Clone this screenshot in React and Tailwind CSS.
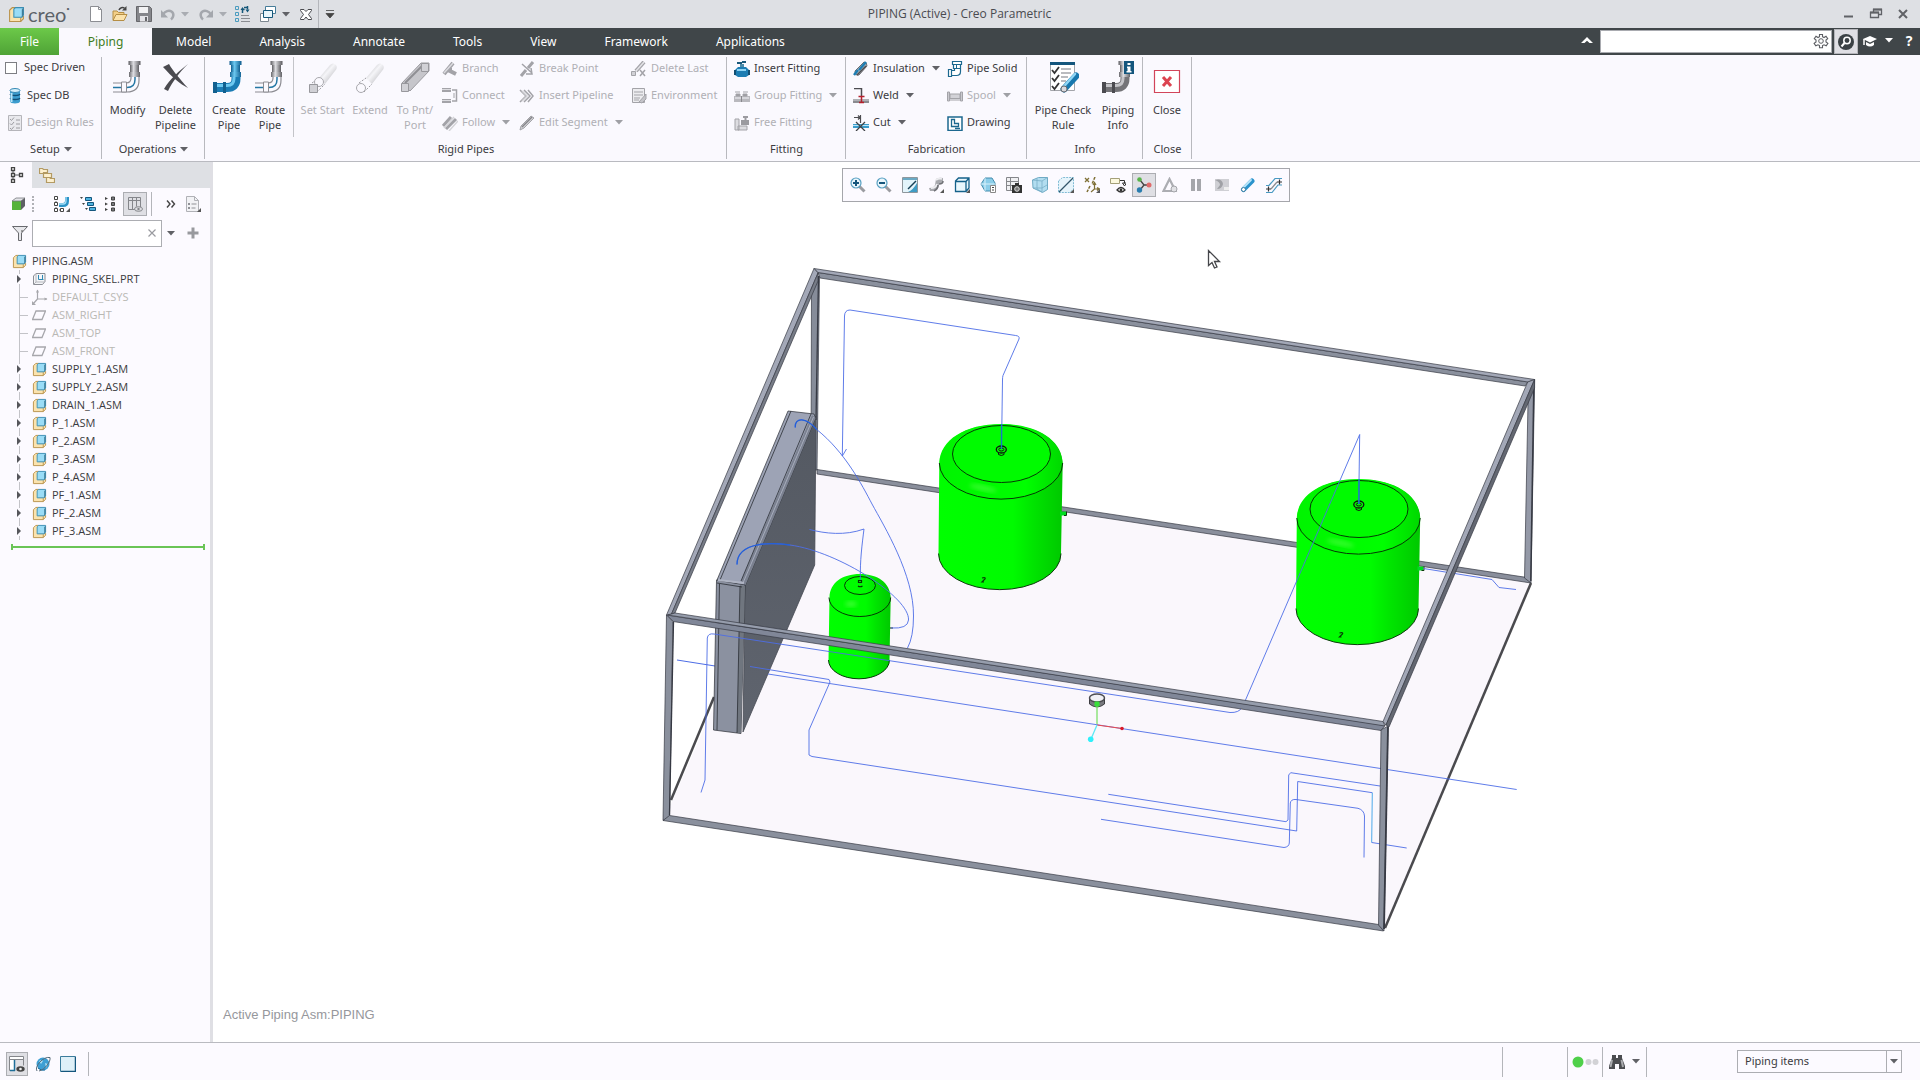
import React from "react";

const UI = "font-['Noto_Sans','Open_Sans',sans-serif]";
const CAPS = "font-['Open_Sans','Noto_Sans',sans-serif]";

/* ---------- small building blocks ---------- */

function Svg({ s = 16, children, className = "" }) {
  return (
    <svg width={s} height={s} viewBox={`0 0 ${s} ${s}`} fill="none" className={`shrink-0 ${className}`} aria-hidden="true">
      {children}
    </svg>
  );
}

function Caret({ className = "text-[#606166]" }) {
  return (
    <svg width="8" height="5" viewBox="0 0 8 5" className={`shrink-0 ${className}`} aria-hidden="true">
      <path d="M0 0h8L4 4.500z" fill="currentColor" />
    </svg>
  );
}

const Corner = () => <path d="M16 12v4h-4z" fill="#555" />;

/* ---------- title bar icons ---------- */

const AsmIcon = ({ s = 16 }) => (
  <svg width={s} height={s} viewBox="0 0 16 16" fill="none" className="shrink-0" aria-hidden="true">
    <path d="M1.500 4 4 1.500h3V10h7.500v2L12 14.500H1.500z" fill="#fbe3ae" stroke="#b9924c" />
    <path d="M12 14.500V11" stroke="#b9924c" />
    <path d="M5.500 3 7 1.500h7.500v7L13 10.500H5.500z" fill="#9adcf6" stroke="#3c8fb4" />
    <path d="M13 3.500 14.500 1.500v7L13 10.500z" fill="#3f7d99" />
  </svg>
);
const NewIcon = () => (
  <Svg><path d="M2.500.5h8l3 3v12h-11z" fill="#fff" stroke="#8b8d92" /><path d="M10.500.5v3h3" stroke="#8b8d92" /></Svg>
);
const OpenIcon = () => (
  <Svg><path d="M1 14V5h4l1.500 1.500H12V9" fill="#f3cf88" stroke="#b58e45" /><path d="M1 14.500 4 8.500h11l-3 6z" fill="#fbe2ab" stroke="#b58e45" /><path d="M7 4c1-2.500 3.500-3 5.500-2" stroke="#444" strokeWidth="1.500" /><path d="M14.500 0v4.500H10z" fill="#444" /></Svg>
);
const SaveIcon = () => (
  <Svg><path d="M.5.5h13l2 2v13H.5z" fill="#85868b" stroke="#66676b" /><path d="M3 1h9v6H3z" fill="#f2f2f4" /><path d="M4 10h8v5.500H4z" fill="#e4e4e8" /><path d="M9 11h2v4H9z" fill="#66676b" /></Svg>
);
const UndoIcon = ({ flip }) => (
  <Svg className={flip ? "-scale-x-100" : ""}><path d="M3 8.500C5 5 9 4 11.500 5.500c3 2 2 6-.5 8" stroke="#a4a7ad" strokeWidth="2.500" /><path d="M1 4v7.500h7z" fill="#a4a7ad" /></Svg>
);
const RegenIcon = () => (
  <Svg><path d="M.5.5h3v3h-3zM.5 6.500h3v3h-3zM.5 12.500h3v3h-3z" stroke="#4b9cbf" /><path d="M6 9.500h8M6 12.500h9M6 15.500h9" stroke="#8b8d92" /><path d="M7.500 7V3.500h2M12.500 0v3.500M9 1.500h3.500" stroke="#16587a" strokeWidth="1.500" /><path d="M5.500 4 7.500 1l2 3zM10.500 3.500h4l-2 3z" fill="#16587a" /></Svg>
);
const WindowsIcon = () => (
  <Svg><path d="M5.500.5h10v7h-10z" fill="#fff" stroke="#477d99" /><path d="M.5 7.500h8v8h-8z" fill="#fff" stroke="#7c8791" /><path d="M3.500 4.500h9v7h-9z" fill="#e8f5fb" stroke="#16587a" /></Svg>
);
const CloseWinIcon = () => (
  <Svg s={14}><path d="M1.500 2.500h3.500l2 2 2-2h3.500v1L9.500 7.500l3 4v1H9l-2-2.500-2 2.500H1.500v-1l3-4-3-4z" fill="#fff" stroke="#4a4b4f" /></Svg>
);

/* ---------- ribbon icons ---------- */

const DbIcon = () => (
  <Svg><path d="M3 2.500v11c0 2.500 10 2.500 10 0v-11z" fill="#3b9cce" /><path d="M3 6c1 2 9 2 10 0M3 10c1 2 9 2 10 0" stroke="#0f4f76" strokeWidth="1.300" /><path d="M4.500 5v9" stroke="#b9e4f8" strokeWidth="2" /><ellipse cx="8" cy="2.500" rx="5" ry="2" fill="#d6f0fb" stroke="#3387b3" /></Svg>
);
const RulesIcon = () => (
  <Svg><path d="M1.500.5h13v15h-13z" fill="#e9e9ed" stroke="#b5b5ba" /><path d="m3 4 1.500 1.500L7 2.500M3 8.500 4.500 10 7 7M3 13l1.500 1.500L7 11.500M9 5h4M9 9h4M9 13h4" stroke="#9c9ca1" /></Svg>
);
function PipeElbow({ tone = "wire", info }) {
  const id = info ? "elbow-info" : `elbow-${tone}`;
  const blue = tone === "blue";
  const c = blue ? ["#0f5c8e", "#6cc8f0", "#0f5c8e"] : ["#5c5c60", "#dedee2", "#5c5c60"];
  return (
    <Svg s={32}>
      <defs>
        <linearGradient id={id}><stop offset="0" stopColor={c[0]} /><stop offset=".4" stopColor={c[1]} /><stop offset="1" stopColor={c[2]} /></linearGradient>
      </defs>
      {tone === "wire" ? (
        <>
          <path d="M1 22h13q5 0 5-5v-3M1 31h14q12 0 12-12v-5" stroke="#8c8c92" strokeWidth="1.200" />
          <path d="M1 26.500h14q8 0 8-8V14" stroke="#2477a4" strokeWidth="1.500" />
          <path d="M9.500 21h5v10h-5z" fill="#faf9fe" stroke="#8c8c92" />
        </>
      ) : (
        <>
          <path d="M2 26.500h12q9 0 9-9V12" stroke={blue ? "#1b7cb4" : "#747478"} strokeWidth="9" />
          <path d="M2 24.500h12q7 0 7-7V12" stroke={blue ? "#6cc8f0" : "#c5c5c9"} strokeWidth="3" />
          <path d="M0 21h4v11H0zM10 21h3v11h-3z" fill={blue ? "#12608f" : "#4b4b50"} />
        </>
      )}
      <path d="M18 4h9v8h-9z" fill={`url(#${id})`} />
      <path d="M16.500 0h12v4h-12zM17 11h11v5H17z" fill={`url(#${id})`} />
      {info && (
        <>
          <path d="M22 0h10v13H22z" fill="#14567d" />
          <path d="M25.500 2h3v2h-3zM25 5.500h3.500V10h1v1.500h-5V10h1V7H25z" fill="#fff" />
        </>
      )}
    </Svg>
  );
}
const DeleteIcon = () => (
  <Svg s={32}><path d="M3 6 9 3c4 7 10 14 19 24-8-4-16-11-25-21z" fill="#4b4b50" /><path d="M28 3C19 10 10 18 4 28l4 2C13 20 19 12 28 3z" fill="#4b4b50" /></Svg>
);
function TubeIcon({ kind }) {
  const id = `tube-${kind}`;
  return (
    <Svg s={32}>
      <defs><linearGradient id={id} x1="0" y1="0" x2="1" y2="1"><stop offset="0" stopColor="#a2a2a7" /><stop offset=".45" stopColor="#f5f5f8" /><stop offset="1" stopColor="#a8a8ad" /></linearGradient></defs>
      {kind === "port" ? (
        <>
          <path d="M3 22 22 2h8v8L11 30z" fill="#c6c6cb" stroke="#9c9ca1" />
          <path d="M6 22 25 3" stroke="#8f8f94" strokeWidth="2" />
          <path d="M22.500 2.500h7v8h-7zM2.500 22.500h7v8h-7z" fill="#d1d1d6" stroke="#98989d" />
        </>
      ) : (
        <>
          <path d="M12 17 23 4q3-3 6 0 2 3-1 6L18 23z" fill={`url(#${id})`} />
          <path d="M5 22 12 17M10 31l8-8" stroke="#9b9ba0" strokeDasharray="2 1.500" />
          <circle cx={kind === "start" ? 12 : 7} cy={kind === "start" ? 21 : 27} r="4.500" fill="#faf9fe" stroke="#a9a9ae" />
          {kind === "start" && <path d="M2.500 23.500h8v8h-8z" fill="#d1d1d6" stroke="#98989d" />}
        </>
      )}
    </Svg>
  );
}
const G = "#a3a3a8";
const BranchIcon = () => <Svg><path d="m2 13 9-11M8 7v3l6 3" stroke={G} strokeWidth="4" /><path d="m2 12 9-10" stroke="#dcdce0" strokeWidth="1.500" /></Svg>;
const ConnectIcon = () => <Svg><path d="M0 2h9M0 13h9" stroke={G} strokeWidth="4" /><path d="M0 1.500h9M0 12.500h9" stroke="#dcdce0" /><path d="M10 2h4.500v11H10" stroke={G} strokeWidth="1.500" /><path d="M12 5v5" stroke={G} /></Svg>;
const FollowIcon = () => <Svg><path d="m1 11 8-9M4 14 14 4" stroke={G} strokeWidth="3" /><path d="M2 13 12 2M7 16l9-10" stroke="#d4d4d8" strokeWidth="1.500" /></Svg>;
const BreakIcon = () => <Svg><path d="m2 15 5-6M9 7l5-6" stroke={G} strokeWidth="3" /><path d="m3 3 10 9M12 7l1 6H7" stroke={G} strokeWidth="1.500" /></Svg>;
const InsertPipeIcon = () => <Svg><path d="m1 2 6 6-6 6M5 2l6 6-6 6M9 2l5 6-5 6" stroke={G} strokeWidth="1.500" /><path d="m3 3 5 5-5 5" stroke="#d0d0d4" strokeWidth="1.500" /></Svg>;
const EditSegIcon = () => <Svg><path d="M2 11 12 1l3 2L5 13l-4 2z" fill="#cfcfd3" stroke={G} /><path d="m3 12 10-10" stroke="#85858a" strokeWidth="1.500" /></Svg>;
const DeleteLastIcon = () => <Svg><path d="m5 10 8-9" stroke={G} strokeWidth="4" /><path d="m5 10 8-9" stroke="#e3e3e7" strokeWidth="1.500" /><path d="M.5 10.500h4v4h-4z" fill="#d1d1d6" stroke={G} /><path d="m9 9 5 6M14 9l-5 6" stroke={G} strokeWidth="1.500" /></Svg>;
const EnvIcon = () => <Svg><path d="M1.500.5h12v14h-12z" fill="#ececef" stroke={G} /><path d="M3 4h9M3 7h9M3 10h6M3 12h5" stroke={G} /><path d="m8 14 7-8v5l-4 4z" fill="#c4c4c9" stroke={G} /></Svg>;
const ValveIcon = () => <Svg><path d="M4 6h8l3 3v5l-3 2H4l-3-2V9z" fill="#1c7db3" /><path d="M3 8h9v2H3z" fill="#8fd4f4" /><path d="M6 3h4v3H6z" fill="#4c8aa8" /><path d="M3 1h5v2H3zM8 0h4v2H8z" fill="#19597b" /><path d="M0 9h2v5H0zM14 9h2v5h-2z" fill="#124f73" /></Svg>;
const GroupFitIcon = () => <Svg><path d="M0 8h16v6H0z" fill="#b9b9be" /><path d="M2 6h4v2H2zM9 6h4v2H9zM1 4h5M9 4h5" stroke={G} fill="#9b9ba0" /><path d="M1 10h14" stroke="#e1e1e5" strokeWidth="1.500" /><path d="M7.500 8v6" stroke="#88888d" /></Svg>;
const FreeFitIcon = () => <Svg><path d="M1.500 4v10.500h11M4 5v7M4 11.500h4" stroke={G} /><path d="M1 4h4v11H1zM4 11h9v4H4z" fill="#dddde1" stroke={G} /><path d="M7 5h8v5H7zM9 1h5v2H9zM10.500 2h2v3h-2z" fill="#9b9ba0" /></Svg>;
const InsulIcon = () => <Svg><path d="M2 10 11 1q3 0 3 4l-8 9q-4 1-4-4z" fill="#b4b6bb" stroke="#6c6e73" /><path d="m1 14 4-5M6 9l7-8" stroke="#1c7db3" strokeWidth="2.500" /><path d="m4 14 9-9" stroke="#4d4e52" strokeWidth="1.500" /></Svg>;
const WeldIcon = () => <Svg><path d="M1 .5h7.500V8" stroke="#4c4c50" strokeWidth="1.500" /><path d="M0 11h16v4H0z" fill="#8a8b90" /><path d="M0 12h16" stroke="#d6d6da" /><path d="M5.500 8.500h6M8.500 8v7M6 14.500h5" stroke="#b3202c" strokeWidth="1.500" /></Svg>;
const CutIcon = () => <Svg><path d="M1 2.500h5M7.500 0v8M5 .5 7 2.500 5 4.500" stroke="#4c4c50" strokeWidth="1.200" /><path d="M0 9h16v4H0z" fill="#3a9ccb" /><path d="M0 10.500h16" stroke="#bce6f8" /><path d="m3 7 9 9M12 7l-9 9" stroke="#3f4347" strokeWidth="1.300" /></Svg>;
const PipeSolidIcon = () => <Svg><path d="M5.500.5h9v3h-9zM6.500 3.500h7v4h-7zM7.500 7.500h6v3q0 4-4 4h-5v-5h3zM1.500 8.500h3v7h-3z" fill="#fff" stroke="#1c688f" strokeWidth="1.200" /><path d="M9.500 3.500v4" stroke="#1c688f" /></Svg>;
const SpoolIcon = () => <Svg><path d="M.5 4h2v9h-2zM13.500 4h2v9h-2z" fill="#c9c9ce" stroke={G} /><path d="M3 6h10v4.500H3z" fill="#d2d2d7" stroke={G} /><path d="M3 12h10" stroke={G} /></Svg>;
const DrawingIcon = () => <Svg><path d="M1 2h14v13.500H1z" fill="#fff" stroke="#1c688f" strokeWidth="1.500" /><path d="M4.500 4.500h3v4h4v3h-7zM8 13.500h5" stroke="#1c688f" strokeWidth="1.300" /></Svg>;
const CheckRuleIcon = () => (
  <Svg s={32}>
    <path d="M3.500 2.500h24v27h-24z" fill="#fff" stroke="#a3a5aa" />
    <path d="M3 1h25v3H3z" fill="#14567d" />
    <path d="M14 8h10M14 12h10M14 16h7M14 20h5" stroke="#a3a5aa" strokeWidth="1.500" />
    <path d="m5 9 2.500 3L12 6M5 17l2.500 3L12 14M5 25l2.500 3L12 22" stroke="#333" strokeWidth="1.800" />
    <path d="M17 28 29 15" stroke="#1878ae" strokeWidth="7" strokeLinecap="round" />
    <path d="M15.500 27 28 13" stroke="#8fd6f5" strokeWidth="2.500" strokeLinecap="round" />
    <ellipse cx="17" cy="28" rx="3" ry="3" fill="#d9dade" stroke="#6a6b70" />
  </Svg>
);
const CloseRedIcon = () => (
  <Svg s={32}><path d="M3.500 9.500h25v22h-25z" fill="#fff" stroke="#d2455a" strokeWidth="1.200" /><path d="m12 16 8 9M20 16l-8 9" stroke="#dc4450" strokeWidth="3" /></Svg>
);

/* ---------- ribbon ---------- */

function Big({ icon, children, off, w }) {
  return (
    <button type="button" disabled={off} className={`${w} flex flex-col items-center pt-[6px] gap-[9px] leading-[15px] text-center ${off ? "text-[#b0b0b5]" : "text-[#3b3b40]"}`}>
      {icon}
      <span>{children}</span>
    </button>
  );
}
function Small({ icon, children, off, caret }) {
  return (
    <button type="button" disabled={off} className={`h-[27px] flex items-center gap-1 whitespace-nowrap ${off ? "text-[#b0b0b5]" : "text-[#3b3b40]"}`}>
      {icon}
      <span>{children}</span>
      {caret && <Caret className={`ml-[3px] ${off ? "text-[#9fa0a5]" : "text-[#606166]"}`} />}
    </button>
  );
}
function Group({ label, caret, w, children }) {
  return (
    <section className={`${w} relative flex flex-col shrink-0 after:content-[''] after:absolute after:right-0 after:top-[2px] after:bottom-[2px] after:w-px after:bg-[#b8b9be]`}>
      <div className="h-[82px] flex">{children}</div>
      <div className="h-6 flex items-center justify-center gap-1 pt-px text-[#3b3b40]">
        {label}
        {caret && <Caret />}
      </div>
    </section>
  );
}

function Ribbon() {
  return (
    <div className={`${UI} flex bg-[#faf9fe] text-[11px] border-b border-[#b9bac0]`}>
      <Group label="Setup" caret w="w-[102px]">
        <div className="flex flex-col pl-[5px]">
          <label className="h-[25px] flex items-center gap-[7px] text-[#3b3b40] whitespace-nowrap">
            <input type="checkbox" className="appearance-none size-3 border border-[#7d7e83] bg-white" />
            Spec Driven
          </label>
          <div className="pl-[2px] flex flex-col pt-[2px]">
            <Small icon={<DbIcon />}>Spec DB</Small>
            <Small icon={<RulesIcon />} off>Design Rules</Small>
          </div>
        </div>
      </Group>
      <Group label="Operations" caret w="w-[103px]">
        <div className="flex pl-[2px]">
          <Big w="w-[47px]" icon={<PipeElbow />}>Modify</Big>
          <Big w="w-[49px]" icon={<DeleteIcon />}>Delete Pipeline</Big>
        </div>
      </Group>
      <Group label="Rigid Pipes" w="w-[522px]">
        <div className="flex pl-1">
          <Big w="w-[40px]" icon={<PipeElbow tone="blue" />}>Create Pipe</Big>
          <Big w="w-[42px]" icon={<PipeElbow />}>Route Pipe</Big>
        </div>
        <div className="w-px ml-[2px] mr-1 mt-[2px] bg-[#c3c4c9]" />
        <div className="flex">
          <Big w="w-[49px]" off icon={<TubeIcon kind="start" />}>Set Start</Big>
          <Big w="w-[46px]" off icon={<TubeIcon kind="extend" />}>Extend</Big>
          <Big w="w-[44px]" off icon={<TubeIcon kind="port" />}>To Pnt/<br />Port</Big>
        </div>
        <div className="flex flex-col w-[77px] ml-[5px]">
          <Small off icon={<BranchIcon />}>Branch</Small>
          <Small off icon={<ConnectIcon />}>Connect</Small>
          <Small off caret icon={<FollowIcon />}>Follow</Small>
        </div>
        <div className="flex flex-col w-[112px]">
          <Small off icon={<BreakIcon />}>Break Point</Small>
          <Small off icon={<InsertPipeIcon />}>Insert Pipeline</Small>
          <Small off caret icon={<EditSegIcon />}>Edit Segment</Small>
        </div>
        <div className="flex flex-col">
          <Small off icon={<DeleteLastIcon />}>Delete Last</Small>
          <Small off icon={<EnvIcon />}>Environment</Small>
        </div>
      </Group>
      <Group label="Fitting" w="w-[119px]">
        <div className="flex flex-col pl-[7px]">
          <Small icon={<ValveIcon />}>Insert Fitting</Small>
          <Small off caret icon={<GroupFitIcon />}>Group Fitting</Small>
          <Small off icon={<FreeFitIcon />}>Free Fitting</Small>
        </div>
      </Group>
      <Group label="Fabrication" w="w-[181px]">
        <div className="flex flex-col pl-[7px] w-[101px]">
          <Small caret icon={<InsulIcon />}>Insulation</Small>
          <Small caret icon={<WeldIcon />}>Weld</Small>
          <Small caret icon={<CutIcon />}>Cut</Small>
        </div>
        <div className="flex flex-col">
          <Small icon={<PipeSolidIcon />}>Pipe Solid</Small>
          <Small off caret icon={<SpoolIcon />}>Spool</Small>
          <Small icon={<DrawingIcon />}>Drawing</Small>
        </div>
      </Group>
      <Group label="Info" w="w-[116px]">
        <Big w="w-[72px]" icon={<CheckRuleIcon />}>Pipe Check Rule</Big>
        <Big w="w-[38px]" icon={<PipeElbow tone="gray" info />}>Piping Info</Big>
      </Group>
      <Group label="Close" w="w-[49px]">
        <Big w="w-12" icon={<CloseRedIcon />}>Close</Big>
      </Group>
    </div>
  );
}

/* ---------- header ---------- */

function TitleBar() {
  return (
    <header className="h-7 flex items-center bg-[#dee0e4] text-[#4a4b50]">
      <div className="flex-1 flex items-center pl-2">
        <AsmIcon s={17} />
        <span className="ml-[3px] w-[58px] font-['Lato',sans-serif] text-[20px] leading-5 text-[#5c6268]">creo<sup className="text-[6px] align-super">•</sup></span>
        <div className="flex items-center">
          <button type="button" aria-label="New" className="ml-[2px]"><NewIcon /></button>
          <button type="button" aria-label="Open" className="ml-2"><OpenIcon /></button>
          <button type="button" aria-label="Save" className="ml-2"><SaveIcon /></button>
          <button type="button" aria-label="Undo" className="ml-2 flex items-center gap-[5px]"><UndoIcon /><Caret className="text-[#a9acb2]" /></button>
          <button type="button" aria-label="Redo" className="ml-[9px] flex items-center gap-[5px]"><UndoIcon flip /><Caret className="text-[#a9acb2]" /></button>
          <button type="button" aria-label="Regenerate" className="ml-2"><RegenIcon /></button>
          <button type="button" aria-label="Windows" className="ml-[9px] flex items-center gap-[6px]"><WindowsIcon /><Caret /></button>
          <button type="button" aria-label="Close window" className="ml-[9px]"><CloseWinIcon /></button>
          <span className="w-px h-7 bg-[#b4b6bb] ml-[5px]" />
          <button type="button" aria-label="Customize toolbar" className="ml-[6px]"><Svg s={10}><path d="M1 1.500h8M1 4.500h8L5 9z" stroke="#444" fill="#444" strokeWidth=".8" /></Svg></button>
        </div>
      </div>
      <h1 className={`${CAPS} text-[12px]`}>PIPING (Active) - Creo Parametric</h1>
      <div className="flex-1 flex items-center justify-end gap-[11px] pr-[9px]">
        <button type="button" aria-label="Minimize"><Svg><path d="M3 10.500h9" stroke="#606267" strokeWidth="2" /></Svg></button>
        <button type="button" aria-label="Restore"><Svg><path d="M5.500 6V3.500h8v5H11M2.500 6.500h8v5h-8z" stroke="#606267" strokeWidth="1.300" /><path d="M5 3.500h9M2 6.500h9" stroke="#606267" strokeWidth="2" /></Svg></button>
        <button type="button" aria-label="Close"><Svg><path d="m4 4 8 8M12 4l-8 8" stroke="#606267" strokeWidth="2" /></Svg></button>
      </div>
    </header>
  );
}

const TABS = ["Model", "Analysis", "Annotate", "Tools", "View", "Framework", "Applications"];

function MenuBar() {
  return (
    <nav className={`${UI} h-[27px] flex items-center bg-[#404649] text-white text-[12px]`}>
      <button type="button" className="h-full w-[59px] pt-px bg-linear-to-b from-[#6cc949] to-[#4fa336]">File</button>
      <button type="button" className="h-full w-[93px] pt-px bg-[#faf9fe] text-[#3f7d22]">Piping</button>
      <div className="flex gap-12 pl-6 pt-px">
        {TABS.map((t) => (
          <button type="button" key={t}>{t}</button>
        ))}
      </div>
      <div className="ml-auto h-full flex items-center">
        <button type="button" aria-label="Collapse ribbon" className="mr-[7px] pb-1"><Svg s={12}><path d="M0 9 6 3l6 6H8.500L6 6.800 3.500 9z" fill="#fff" /></Svg></button>
        <div className="flex items-center w-[232px] h-[23px] bg-white border border-[#a9abb0]">
          <input type="text" aria-label="Search commands" className="min-w-0 flex-1 px-1 text-black outline-none" />
          <Svg><path d="M6.500.5h3v2.200l1.500.8 2-1.200 1.700 2.400-1.700 1.300v2l1.900 1.300-1.700 2.500-2.200-1-1.500.8v2.200h-3v-2.200L5 10.800l-2.200 1L1.100 9.300 3 8V6L1.300 4.700 3 2.300l2 1.200 1.500-.8z" stroke="#5c5e63" strokeWidth="1.100" /><circle cx="8" cy="7" r="2.300" stroke="#5c5e63" /></Svg>
          <span className="w-[2px]" />
        </div>
        <button type="button" aria-label="Search" className="ml-[2px] w-6 h-[25px] flex items-center justify-center bg-[#dfdfe4] border border-[#b4b5ba]">
          <Svg><circle cx="8" cy="8" r="8" fill="#3b4145" /><circle cx="9" cy="6.500" r="3.200" stroke="#fff" strokeWidth="1.500" /><path d="m6.500 9-3 3.500" stroke="#fff" strokeWidth="2" /></Svg>
        </button>
        <button type="button" aria-label="Learning" className="ml-[5px] pb-[2px] flex items-center gap-2">
          <Svg s={14}><path d="m7 2 7 3-7 3.500L0 5z" fill="#fff" /><path d="M3 8v3q4 3 8 0V8L7 10z" fill="#fff" /><path d="M1 5v6" stroke="#fff" strokeWidth="1.500" /></Svg>
          <Caret className="text-white" />
        </button>
        <button type="button" aria-label="Help" className="ml-3 mr-[7px] pb-[2px] w-2 text-[14px] font-bold leading-4">?</button>
      </div>
    </nav>
  );
}

/* ---------- model tree ---------- */

const SkelIcon = () => <Svg s={14}><path d="M1.500 4 4 1.500h9v8L10.500 12.500h-9z" fill="#f4f5f8" stroke="#8b8d94" /><path d="M4 1.500V10h9M1.500 12.500 4 10" stroke="#b4b5bb" /><path d="M6.500 3v4.500h5M10.500 3v4.500" stroke="#2f88b3" /></Svg>;
const CsysIcon = () => <Svg s={16}><path d="M5.500 1v9H15M5.500 10 1 15" stroke="#a7a7ac" strokeWidth="1.200" /><path d="M4 3.500 5.500.5 7 3.500M12.500 8.500 15.500 10l-3 1.500M0 12v4h4" fill="#a7a7ac" /></Svg>;
const PlaneIcon = () => <Svg s={14}><path d="M4 3h9.500L10 11.500H.5z" stroke="#a7a7ac" strokeWidth="1.300" /></Svg>;

const TREE = [
  ["PIPING_SKEL.PRT", "skel"],
  ["DEFAULT_CSYS", "csys"],
  ["ASM_RIGHT", "plane"],
  ["ASM_TOP", "plane"],
  ["ASM_FRONT", "plane"],
  ["SUPPLY_1.ASM", "asm"],
  ["SUPPLY_2.ASM", "asm"],
  ["DRAIN_1.ASM", "asm"],
  ["P_1.ASM", "asm"],
  ["P_2.ASM", "asm"],
  ["P_3.ASM", "asm"],
  ["P_4.ASM", "asm"],
  ["PF_1.ASM", "asm"],
  ["PF_2.ASM", "asm"],
  ["PF_3.ASM", "asm"],
];
const TREE_ICON = { skel: <SkelIcon />, csys: <CsysIcon />, plane: <PlaneIcon />, asm: <AsmIcon s={15} /> };

function TreeRow({ name, kind }) {
  const leaf = kind === "csys" || kind === "plane";
  return (
    <li className="h-[18px] flex items-center">
      <span className="w-4 h-full flex items-center shrink-0">
        {leaf ? (
          <svg width="15" height="18" viewBox="0 0 15 18" aria-hidden="true"><path d="M3.500 0v18M3.500 9.500H12" stroke="#c3c3c8" fill="none" /></svg>
        ) : (
          <svg width="15" height="18" viewBox="0 0 15 18" aria-hidden="true"><path d="M3.500 0v4M3.500 14v4" stroke="#c3c3c8" /><path d="M1 5v8l4-4z" fill="#55565b" /></svg>
        )}
      </span>
      <span className="w-5 flex justify-start">{TREE_ICON[kind]}</span>
      <span className={leaf ? "text-[#b9b8b4]" : "text-[#3b3b40]"}>{name}</span>
    </li>
  );
}

function Sidebar() {
  return (
    <aside className="w-[213px] shrink-0 flex flex-col bg-[#fcfaff] border-r-3 border-[#dfdfe4]">
      <div className="h-[26px] flex bg-[#dee0e4]">
        <button type="button" aria-label="Model tree" className="w-8 pl-1 flex items-center justify-center bg-[#fcfaff]">
          <Svg><path d="M3 3.500V13M3 8h8" stroke="#55565b" /><path d="M1.500.5h3v3h-3zM1.500 6.500h3v3h-3zM1.500 12.500h3v3h-3zM9.500 6.500h3v3h-3z" fill="#fff" stroke="#444" strokeWidth="1.300" /></Svg>
        </button>
        <button type="button" aria-label="Folders" className="ml-[7px]">
          <Svg><path d="M.5 1.500h3l1 1h4v4h-8zM4.500 5.500h3l1 1h4v4h-8zM7.500 10.500h3l1 1h4v4h-8z" fill="#fdf0cf" stroke="#b39a63" strokeWidth="1.200" /></Svg>
        </button>
      </div>
      <div className="h-[31px] flex items-center pl-3">
        <button type="button" aria-label="Model"><Svg s={14}><path d="M0 4h9v9H0z" fill="#56b33a" /><path d="m0 4 4-3h9L9 4z" fill="#e4e5e9" stroke="#77787d" strokeWidth=".8" /><path d="m9 4 4-3v8l-4 4z" fill="#5e6064" /></Svg></button>
        <span className="ml-[6px] h-4 border-l-2 border-dotted border-[#b0b1b6]" />
        <button type="button" aria-label="Piping tree" className="ml-5"><Svg><path d="M2 2v12h7" stroke="#666" strokeDasharray="2 1" /><path d="M.5.5h3v3h-3zM.5 6.500h3v3h-3zM.5 12.500h3v3h-3zM6.500 12.500h3v3h-3z" fill="#fff" stroke="#444" /><path d="M5 9h4q4 0 4-4V1" stroke="#2e93c6" strokeWidth="4" /><path d="M5 8h4q3 0 3-3V1" stroke="#a5def7" strokeWidth="1.300" /><Corner /></Svg></button>
        <button type="button" aria-label="Expand levels" className="ml-[10px]"><Svg><path d="M5.500 1.500h6v3h-6zM7.500 6.500h6v3h-6zM9.500 11.500h6v3h-6z" fill="#4fb2df" stroke="#14567d" /><path d="M0 1h3L1.500 3zM2 7h3L3.500 9zM5 12h3l-1.500 2z" fill="#444" /></Svg></button>
        <button type="button" aria-label="List" className="ml-[7px]"><Svg><path d="M8.500 1h3v3h-3zM8.500 6.500h3v3h-3zM8.500 12h3v3h-3z" fill="#77787d" stroke="#444" /><path d="m2 1 3 1.500L2 4zM2 6.500 5 8 2 9.500zM2 12l3 1.500L2 15z" fill="#444" /></Svg></button>
        <button type="button" aria-label="Columns" className="ml-1 w-6 h-6 flex items-center justify-center bg-[#dfdfe4] border border-[#acadb2]"><Svg><path d="M1.500 1.500h12v12h-12zM1.500 4.500h12M5.500 1.500v12M9.500 1.500v9" stroke="#85868b" /><ellipse cx="11.500" cy="13" rx="4" ry="2.300" fill="#dfdfe4" stroke="#85868b" /><circle cx="11.500" cy="13" r="1.200" fill="#85868b" /></Svg></button>
        <span className="ml-1 w-px h-6 bg-[#b4b5ba]" />
        <button type="button" aria-label="More" className="ml-[14px]"><Svg s={10}><path d="m1 1.500 3 3.500-3 3.500M5.500 1.500l3 3.500-3 3.500" stroke="#444" strokeWidth="1.400" /></Svg></button>
        <button type="button" aria-label="Display settings" className="ml-[9px]"><Svg><path d="M1.500.5h8l4 4v11h-12z" fill="#f2f2f5" stroke="#b0b1b6" /><path d="M9.500.5v4h4" stroke="#b0b1b6" /><path d="M3 7h2v2H3zM3 11h2v2H3z" fill="#909196" /><path d="M6.500 8h5M6.500 12h4" stroke="#909196" /><Corner /></Svg></button>
      </div>
      <div className="h-7 flex items-center pl-3">
        <Svg><path d="M.5 1.500h15L9.500 8v7.500h-3V8z" fill="#e7e7eb" stroke="#68696e" /><path d="M10 5v2" stroke="#555" /></Svg>
        <div className="ml-1 w-[130px] h-[27px] flex items-center bg-white border border-[#acadb2]">
          <input type="text" aria-label="Filter tree" className="min-w-0 flex-1 px-1 text-[12px] outline-none" />
          <button type="button" aria-label="Clear filter" className="mr-1"><Svg s={10}><path d="m1.500 1.500 7 7M8.500 1.500l-7 7" stroke="#9a9ba0" strokeWidth="1.200" /></Svg></button>
        </div>
        <button type="button" aria-label="Filter options" className="ml-[5px]"><Caret /></button>
        <button type="button" aria-label="Add filter" className="ml-3"><Svg s={12}><path d="M6 .5v11M.5 6h11" stroke="#98999e" strokeWidth="3" /></Svg></button>
      </div>
      <div className={`${CAPS} mt-[5px] text-[11px] leading-[18px]`}>
        <div className="h-[18px] flex items-center pl-3 text-[#3b3b40]"><span className="w-5"><AsmIcon s={15} /></span>PIPING.ASM</div>
        <ul className="pl-4">
          {TREE.map(([name, kind]) => <TreeRow key={name} name={name} kind={kind} />)}
        </ul>
      </div>
      <div className="ml-[11px] mr-[5px] mt-[3px] h-[7px] flex items-center">
        <span className="w-[2px] h-[6px] bg-[#6ac456]" />
        <span className="flex-1 h-[2px] bg-[#6ac456]" />
        <span className="w-[2px] h-[6px] bg-[#6ac456]" />
      </div>
    </aside>
  );
}

/* ---------- floating view toolbar ---------- */

const VIEW_TOOLS = [
  ["Zoom in", <><path d="m9 9 5.500 5.500" stroke="#9a9ba0" strokeWidth="3" /><circle cx="6" cy="6" r="5" fill="#e9f6fc" stroke="#58a0c2" strokeWidth="1.200" /><path d="M6 3v6M3 6h6" stroke="#14567d" strokeWidth="2" /></>],
  ["Zoom out", <><path d="m9 9 5.500 5.500" stroke="#9a9ba0" strokeWidth="3" /><circle cx="6" cy="6" r="5" fill="#e9f6fc" stroke="#58a0c2" strokeWidth="1.200" /><path d="M3 6h6" stroke="#14567d" strokeWidth="2" /></>],
  ["Repaint", <><path d="M.5.5h15v15H.5z" fill="#e3f4fb" stroke="#8e979d" /><path d="M6 15q5-2 9-9v9z" fill="#3f9cc4" /><path d="M1 1h14v2H1z" fill="#6aa9c4" /><path d="M6 12 14 4" stroke="#143f57" strokeWidth="1.500" /></>],
  ["Shading", <><path d="M8 2q3-2 7-1v5l-4 1q0 6-5 7H2l-1-3q5 0 6-3z" fill="#a8a9ae" /><path d="M8 3q3-2 6-1M3 11q5 0 6-4" stroke="#ededf0" strokeWidth="1.800" /><path d="M10 8q0 4-4 6M15 4q0 3-4 3" stroke="#707176" strokeWidth="1.500" /><Corner /></>],
  ["Display style", <><path d="m1.500 4 3-3H15v10l-3 3.500H1.500zM1.500 4.500H12V14M12 4.500 15 1" fill="#eaf7fd" stroke="#15618a" strokeWidth="1.300" /><Corner /></>],
  ["Saved views", <><path d="m1 7 4-6h7l3 5v8H5z" fill="#8bcde9" stroke="#438cad" /><path d="M5 1v13M1 7h14" stroke="#d9f1fb" /><path d="M10.500 8.500h5v7h-5z" fill="#fff" stroke="#888" /><path d="M12 10.500h2M12 13h2" stroke="#444" /></>],
  ["Capture", <><path d="M.5.5h12v13H.5zM.5 4.500h12M.5 8.500h12M4.500.5v13" stroke="#85868b" fill="#f0f0f3" /><path d="M6 8h10v8H6zM9 6h4v2H9z" fill="#333" /><circle cx="11" cy="12" r="2.300" fill="#777" stroke="#ddd" /></>],
  ["Perspective", <><path d="m.5 3 6-2.500h9v12l-5 3L1 11z" fill="#b2ddf0" stroke="#6faac4" /><path d="m.5 3 9.500 1v11M10 4l5.500-3.500M5 2v10M5 12l5 3M1 11h9l5-3" stroke="#78afc8" strokeWidth=".8" /></>],
  ["Section", <><path d="m.5 4 4-3.500h11v12l-4 3H.5z" fill="#e6f4fb" stroke="#81bcd5" strokeDasharray="2 1" /><path d="M1 15 15 1" stroke="#33566a" strokeWidth="1.300" /><Corner /></>],
  ["Datum display", <><path d="m1 1 4 4M5 1 1 5" stroke="#7f7036" strokeWidth="1.300" /><path d="M11 0 8 7M6 9l-3 6" stroke="#7f7036" strokeWidth="1.500" strokeDasharray="3 1" /><path d="M10.500 6v6H15M10.500 12 7 15M9 8l1.500-2.500L12 8M13 10.500l2.500 1.500-2.500 1.500" stroke="#7f7036" strokeWidth="1.200" /><Corner /></>],
  ["Annotation display", <><path d="M.5 1.500h9v5h-9z" fill="#fcf9df" stroke="#a49f79" /><path d="M10 3.500h4.500v3M12.500 6h4l-2 3z" stroke="#333" /><path d="M7 13q4-5 8 0-4 4-8 0z" fill="#fff" stroke="#333" strokeWidth="1.300" /><circle cx="11" cy="13" r="1.400" fill="#333" /></>],
  ["Spin center", <><path d="m4 3 4 5h5M8 8l-4 5" stroke="#444" strokeWidth="1.300" /><circle cx="3.500" cy="2.500" r="2.300" fill="#57b44a" /><circle cx="13" cy="8" r="2.500" fill="#e06a6a" /><circle cx="3.500" cy="13" r="2.700" fill="#2a7dae" /></>],
  ["Simulation", <><path d="m7.500 2 6 12H1.500z" stroke="#acadb2" strokeWidth="2.200" /><circle cx="12" cy="12" r="3" fill="#e1e1e5" stroke="#a3a4a9" /></>],
  ["Pause", <path d="M3 2h4v12H3zM9 2h4v12H9z" fill="#a5a6ab" />],
  ["Record", <><path d="M1 2h14v12H1z" fill="#cfcfd4" /><path d="M1 3q7-2 8 4-1 5-6 5l3-4q0-3-5-5z" fill="#a0a1a6" /><path d="M10 10h5v3h-5z" fill="#eee" /></>],
  ["Pipe display", <><path d="M3.500 12.500 12 4" stroke="#2b93cc" strokeWidth="5" strokeLinecap="round" /><path d="M2.500 11.500 11 3" stroke="#b9e6fa" strokeWidth="1.800" strokeLinecap="round" /><ellipse cx="3.500" cy="12.500" rx="2" ry="2" fill="#fff" stroke="#3a7da1" /></>],
  ["Flow display", <><path d="M0 8.500h3L9 1.500h7M0 15.500h6L12 8h4" stroke="#4899c2" strokeWidth="1.200" /><path d="M5 12 11 5" stroke="#8a8b90" strokeWidth="1.200" /><path d="M0 12h5M2.500 9.500v5M11 5h5M13.500 2.500v5" stroke="#333" strokeWidth="1.200" /></>],
];

function ViewToolbar() {
  return (
    <div className="absolute inset-x-0 top-[6px] flex justify-center pr-[2px]">
      <div className="flex gap-[2px] px-[3px] py-1 bg-[#fcfaff] border border-[#a5a6ab]" role="toolbar" aria-label="Graphics toolbar">
        {VIEW_TOOLS.map(([name, art]) => (
          <button type="button" key={name} aria-label={name} className={`w-6 h-6 flex items-center justify-center border ${name === "Spin center" ? "bg-[#dfdfe4] border-[#acadb2]" : "border-transparent"}`}>
            <Svg>{art}</Svg>
          </button>
        ))}
      </div>
    </div>
  );
}

/* ---------- 3D scene ---------- */

function Tank({ x, y }) {
  return (
    <g transform={`translate(${x} ${y})`}>
      <path d="M938.500 553.500A61 36 0 0 0 1061 553.500L1062.700 463C1062 440 1037 424 1001 424S940 440 939.300 463z" fill="url(#tank)" />
      <path d="M938.500 553.500A61 36 0 0 0 1061 553.500" stroke="#0c3a0c" />
      <path d="M939.500 463C941 440 965 424.500 1001 424.500S1061 440 1062.500 463A61.500 36 0 0 1 939.500 463z" fill="url(#dome)" />
      <ellipse cx="983" cy="488" rx="14" ry="3" fill="#6dff5c" opacity=".45" transform="rotate(12 983 488)" filter="url(#soft)" />
      <path d="M939.300 463A61.500 36 0 0 0 1062.700 463" stroke="#053805" />
      <ellipse cx="1001.500" cy="454" rx="49" ry="28.500" fill="#00fb00" stroke="#053805" />
      <ellipse cx="1001.300" cy="449.500" rx="5" ry="3.500" stroke="#111" strokeWidth="1.300" />
      <ellipse cx="1001.300" cy="449.500" rx="2.500" ry="1.500" stroke="#111" />
      <path d="M998.500 453v1.500q3 2 5.500 0V453" stroke="#111" />
      <path d="M982 578q4-1 3 1l-3 3h2" stroke="#063b06" strokeWidth="1.200" />
      <path d="M1060 511.500h6v4h-6z" fill="#00dc20" /><path d="M1064 515.500h2.500v-4" stroke="#0a3a0a" />
    </g>
  );
}

function Scene() {
  const edge = "#363943";
  return (
    <svg viewBox="213 162 1707 880" preserveAspectRatio="xMidYMid slice" fill="none" className="absolute inset-0 w-full h-full" role="img" aria-label="Piping assembly model">
      <defs>
        <linearGradient id="tank"><stop offset="0" stopColor="#00ff00" /><stop offset=".6" stopColor="#00fb00" /><stop offset=".75" stopColor="#00e600" /><stop offset="1" stopColor="#00c800" /></linearGradient>
        <linearGradient id="dome"><stop offset="0" stopColor="#00f400" /><stop offset=".7" stopColor="#00ff00" /><stop offset="1" stopColor="#00d800" /></linearGradient>
        <linearGradient id="side" x1="0" y1="0" x2="0" y2="1"><stop offset="0" stopColor="#545962" /><stop offset="1" stopColor="#5f646e" /></linearGradient>
        <filter id="soft"><feGaussianBlur stdDeviation="2" /></filter>
      </defs>

      <path d="M816 471 1531 583 1385 928 665 818z" fill="#faf7fc" />

      {/* rear frame members */}
      <g stroke={edge} strokeWidth=".7">
        <path d="M817 469.500 1527 577.500 1531 583 817 474z" fill="#8a8f9c" />
        <path d="M811.500 288 819.500 276 817 470H811z" fill="#868c99" />
        <path d="M818.500 276 816 420" strokeWidth="1.300" />
        <path d="M1528 402 1534.600 380 1531 583 1524.500 578z" fill="#9499a7" />
        <path d="M1533.800 388 1530.800 581" strokeWidth="1.500" />
        <path d="M818 272.500 1528 382 1525 386 820 278z" fill="#8a909d" />
        <path d="M814 268.500 1534.600 379.500 1528 382 818 272.500z" fill="#a3a8b7" />
      </g>
      <path d="m1531 583-146 345" stroke="#4a4a4e" strokeWidth="2.500" />
      <path d="M714 697 671 800" stroke="#4a4a4e" strokeWidth="2.500" />
      <path d="m677 660 38 6" stroke="#4d6de6" />

      {/* cabinet */}
      <path d="M816 416 814.700 565 743 732 745 584z" fill="url(#side)" stroke="#454952" strokeWidth=".8" />
      <path d="M788 411 814 414 815.500 418 745 586 717 580z" fill="#9da3b5" stroke="#2a2d34" strokeWidth=".7" />
      <path d="M812 415 815.500 418 745 586 741 581z" fill="#7b8190" />
      <path d="m791 411-71 169M811 414l-70 167" stroke="#2a2d34" strokeWidth=".8" />
      <path d="m813.500 417-70.500 166" stroke="#a7adbd" />
      <path d="M716.500 580 745 585 741 733.500 713.500 730z" fill="#8b91a0" stroke="#2a2d34" strokeWidth=".7" />
      <path d="M740 585 745 586 741 733 737 733z" fill="#70767f" />
      <path d="M718 580 744 583" stroke="#b0b5c4" strokeWidth="2" />
      <path d="M719.500 584 717 730M740 586l-3 147M717 583l25 4" stroke="#2a2d34" strokeWidth=".8" />

      <Tank x={0} y={0} />
      <Tank x={357.500} y={55} />

      {/* small vessel */}
      <path d="M828.500 660A30 18.500 0 0 0 889.500 660L890.700 597C890 583 878 574 860 574S830 583 829.500 597z" fill="url(#tank)" />
      <path d="M828.500 660A30 18.500 0 0 0 889.500 660M829 597.500A30 18.500 0 0 0 890.700 597.500" stroke="#053805" />
      <ellipse cx="851" cy="604" rx="6" ry="3" fill="#6dff5c" opacity=".5" filter="url(#soft)" />
      <ellipse cx="860" cy="585.500" rx="15.500" ry="9" stroke="#053805" />
      <path d="M858.500 580.500h3v2h-3zM858 586q2 1.500 4.500 0M890 628h3" stroke="#0a2a0a" strokeWidth="1.200" />

      {/* pipe routes */}
      <g stroke="#4d6de6" strokeWidth=".9">
        <path d="M846.500 449 842.300 456 844.500 316Q844.700 310 850 310L1015.700 335.500Q1020 336 1019 339L1003 375.500Q1002.500 377 1002.500 380L1001.500 449" />
        <path d="M795.300 427.500C794.500 417 806 417 816.700 429.500C845 452 862 485 872 504C884 526 914 575 913.500 616Q913.500 637 907.500 648" />
        <path d="M809.500 529.500C825 533.500 845 536 864 529C862 545 860 560 860.300 580" />
        <path d="M737 564.500C737 540 775 543 790 545C840 552 910 598 908.500 620Q908 629 891 628" />
        <path d="M701 792.500 705 780 707.300 638Q708 633 714 634L1230 712.500Q1239 713 1242.500 707L1359.700 434.500 1358.700 504" />
        <path d="M768 674 1516.700 789.500" />
        <path d="M750 666.500 829 679.500 830 682 809 730V755L812 756.500 1080 797.700 1296.700 831 1297.700 781.500 1372.300 792.700" />
        <path d="M1372.300 792.700 1371.700 842.500" stroke="#3aa0e8" />
        <path d="m1371.700 842.500 35 5.500" />
        <path d="M1108.300 794.300 1286 821.700 1288 820 1288.700 775 1290.700 772.700 1380 786" />
        <path d="M1101 819.300 1284 847.500Q1289 847 1289.300 843L1290.300 803Q1291 799 1296 799.500L1358 808.300Q1364 810 1364.500 816L1364 857.500" />
        <path d="M1423.500 568.500 1492 579.500 1499 587.500 1516 589.500" />
      </g>
      <g stroke="#2560d8" strokeWidth="1.300">
        <path d="M1001.500 424v25M1359 479v25" stroke="#1676c8" />
        <path d="M795.300 427.500C794.500 417 806 417 816.700 429.500M737 564.500C737 540 775 543 790 545" />
      </g>

      {/* front frame members */}
      <g stroke={edge} strokeWidth=".7">
        <path d="M814 268.500 818 273 671.500 614 666.500 615z" fill="#a3a8b7" />
        <path d="M818 273V281L675 613 671.500 614z" fill="#777c87" />
        <path d="M1527.700 382 1534.600 379.500 1386 725 1383 721.500z" fill="#a3a8b7" />
        <path d="M1534.600 379.500V388L1389 727 1386 725z" fill="#646872" />
        <path d="M666.500 615 1385 725.500 1381 730.500 673 621.500z" fill="#808798" />
        <path d="M675 613 1383 721.500 1385 726 668 615z" fill="#969dac" />
        <path d="M666.500 615 673 621.500 669.500 817 663 820.500z" fill="#8a909d" />
        <path d="m673.500 622-4 193" strokeWidth="1.300" />
        <path d="M669.500 815.500 1378.500 924.500 1383.500 931 663 820.500z" fill="#8a909d" />
        <path d="M1381 730 1388 726 1384 931 1378.500 925z" fill="#8a909d" />
        <path d="M1388 727 1384 929" strokeWidth="1.800" />
      </g>

      {/* spin centre */}
      <path d="M1089.500 698v6q7.500 6 15 0v-6" fill="#78797e" stroke="#3c3d41" />
      <ellipse cx="1097" cy="698" rx="7.500" ry="4" fill="#f1f1f4" stroke="#4b4c50" strokeWidth="1.500" />
      <path d="M1097 703v21" stroke="#7ee06a" strokeWidth="1.300" />
      <path d="M1094.500 701.500h5v5h-5z" fill="#38e038" />
      <path d="m1097 725 25 3.500" stroke="#ee4a4a" />
      <circle cx="1122" cy="728.500" r="1.800" fill="#d8182a" />
      <path d="m1097 725-6 14" stroke="#5ee8f4" strokeWidth="1.300" />
      <circle cx="1090.700" cy="739.300" r="2.800" fill="#2ff0fa" />

      <path d="M1208.500 250.500v15l3.500-3 2.500 5.500 2.500-1-2.500-5.500h5z" fill="#fff" stroke="#45464a" strokeWidth="1.300" />
    </svg>
  );
}

/* ---------- status bar ---------- */

function StatusBar() {
  const rule = "w-px h-[30px] bg-[#b4b5ba]";
  return (
    <footer className="h-[38px] flex items-center bg-[#fcfaff] border-t border-[#b9bac0]">
      <button type="button" aria-label="Toggle tree" className="ml-[6px] mt-1 w-[22px] h-6 flex items-center justify-center bg-[#dfdfe4] border border-[#acadb2]"><Svg><path d="M.5.5h14v3H.5zM.5 3.500h5v11h-5z" fill="#fff" stroke="#85868b" /><path d="M5.500 4v11M1 14.500h5" stroke="#1d6e98" strokeWidth="1.500" /><path d="M6 3.500h8.500v6" stroke="#85868b" /><ellipse cx="11.500" cy="13" rx="4.200" ry="2.800" fill="#444" /><circle cx="11.500" cy="13" r="1.300" fill="#eee" /></Svg></button>
      <button type="button" aria-label="Browser" className="ml-[7px] mt-1"><Svg><circle cx="8" cy="8" r="6.500" fill="#3d9fd4" /><path d="M4 5q3-2 4 0l-2 3zM10 7l3 1-2 4z" fill="#a8dcf2" /><path d="M3 12q3 3 7 2" stroke="#1c6b97" /><path d="M2 15C-1 11 8 0 15 1.500M15 1.500c1 4-5 12-11 13.500" stroke="#566a78" /></Svg></button>
      <button type="button" aria-label="Full screen" className="ml-[9px] mt-1"><Svg><path d="M.5.5h15v15H.5z" fill="#dff0f8" stroke="#3c7c9c" /><path d="M1 15.500h14.500V1" stroke="#14567d" strokeWidth="1.500" /></Svg></button>
      <span className="ml-3 mt-1 w-px h-6 bg-[#b4b5ba]" />
      <div className="ml-auto flex items-center">
        <span className={rule} />
        <span className={`ml-16 ${rule}`} />
        <svg width="34" height="14" viewBox="0 0 34 14" role="img" aria-label="Regeneration status"><circle cx="10" cy="7" r="5.500" fill="#4fd04a" /><circle cx="20.500" cy="7" r="3" fill="#d2d2d6" /><circle cx="27.500" cy="7" r="3" fill="#d2d2d6" /></svg>
        <span className={rule} />
        <button type="button" aria-label="Find" className="flex items-center gap-[7px] px-[6px]">
          <Svg><path d="M3 1h4v3h2V1h4v3l3 8v3h-6v-5H6v5H0v-3l3-8z" fill="#4b4c50" /><path d="M3 6 1.500 13M12.500 6l1.500 7" stroke="#a9aaae" strokeWidth="2" /></Svg>
          <Caret />
        </button>
        <span className={rule} />
        <div className={`${UI} relative ml-[90px] mr-[18px] w-[165px] h-[23px] border border-[#acadb2] bg-[#fcfaff] text-[11px] text-[#3b3b40]`}>
          <select aria-label="Selection filter" defaultValue="Piping items" className="appearance-none w-full h-full pl-[7px] pr-5 bg-transparent outline-none">
            <option>Piping items</option>
          </select>
          <span className="pointer-events-none absolute right-0 inset-y-0 w-[15px] border-l border-[#acadb2] flex items-center justify-center"><Caret /></span>
        </div>
      </div>
    </footer>
  );
}

export default function App() {
  return (
    <div className="min-h-screen flex flex-col bg-white">
      <TitleBar />
      <MenuBar />
      <Ribbon />
      <div className="flex-1 flex">
        <Sidebar />
        <main className="relative flex-1 overflow-hidden bg-white">
          <Scene />
          <ViewToolbar />
          <p className="absolute left-[10px] bottom-[19px] font-['Liberation_Sans',sans-serif] text-[13px] leading-4 text-[#96979c]">Active Piping Asm:PIPING</p>
        </main>
      </div>
      <StatusBar />
    </div>
  );
}
